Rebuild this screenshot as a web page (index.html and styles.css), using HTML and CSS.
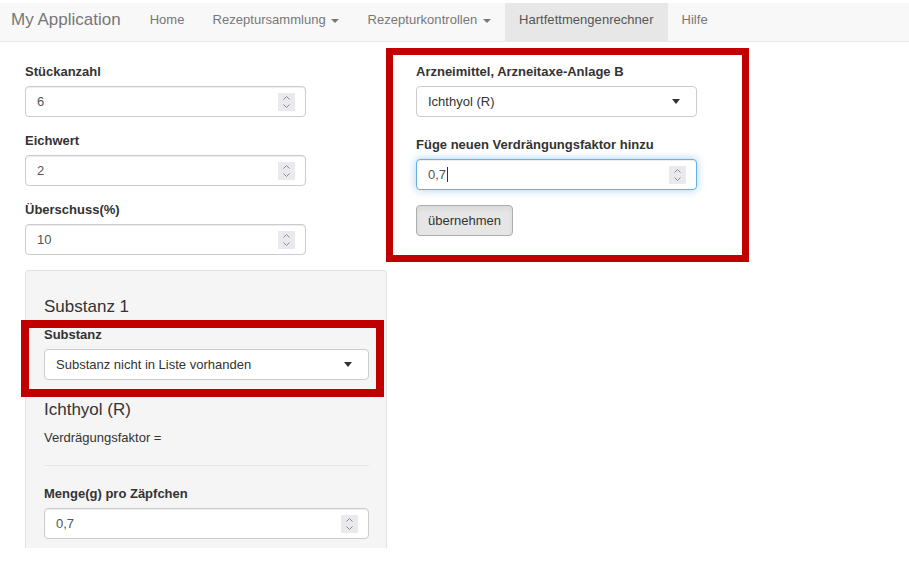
FILE: index.html
```html
<!DOCTYPE html>
<html lang="de">
<head>
<meta charset="utf-8">
<title>My Application</title>
<link rel="stylesheet" href="styles.css">
</head>
<body>
<div class="page">
  <nav class="navbar">
    <span class="brand">My Application</span>
    <ul class="nav">
      <li><a>Home</a></li>
      <li><a>Rezeptursammlung <span class="caret"></span></a></li>
      <li><a>Rezepturkontrollen <span class="caret"></span></a></li>
      <li class="active"><a>Hartfettmengenrechner</a></li>
      <li><a>Hilfe</a></li>
    </ul>
  </nav>

  <main class="main">
    <section class="col-left">
      <div class="form-group">
        <label>Stückanzahl</label>
        <div class="num"><input value="6"><svg class="spin" viewBox="0 0 17 18" width="17" height="18"><rect width="17" height="18" fill="#e9e9ee"/><polyline points="5.5,6.5 8.5,3.5 11.5,6.5" fill="none" stroke="#8a8a8a"/><polyline points="5.5,11.5 8.5,14.5 11.5,11.5" fill="none" stroke="#8a8a8a"/></svg></div>
      </div>
      <div class="form-group">
        <label>Eichwert</label>
        <div class="num"><input value="2"><svg class="spin" viewBox="0 0 17 18" width="17" height="18"><rect width="17" height="18" fill="#e9e9ee"/><polyline points="5.5,6.5 8.5,3.5 11.5,6.5" fill="none" stroke="#8a8a8a"/><polyline points="5.5,11.5 8.5,14.5 11.5,11.5" fill="none" stroke="#8a8a8a"/></svg></div>
      </div>
      <div class="form-group">
        <label>Überschuss(%)</label>
        <div class="num"><input value="10"><svg class="spin" viewBox="0 0 17 18" width="17" height="18"><rect width="17" height="18" fill="#e9e9ee"/><polyline points="5.5,6.5 8.5,3.5 11.5,6.5" fill="none" stroke="#8a8a8a"/><polyline points="5.5,11.5 8.5,14.5 11.5,11.5" fill="none" stroke="#8a8a8a"/></svg></div>
      </div>

      <div class="well">
        <h4 class="well-title">Substanz 1</h4>
        <div class="form-group">
          <label>Substanz</label>
          <div class="select"><span>Substanz nicht in Liste vorhanden</span><span class="sel-caret"></span></div>
        </div>
        <h4 class="sub-title">Ichthyol (R)</h4>
        <p class="factor">Verdrägungsfaktor =</p>
        <hr class="rule">
        <div class="form-group last">
          <label>Menge(g) pro Zäpfchen</label>
          <div class="num"><input value="0,7"><svg class="spin" viewBox="0 0 17 18" width="17" height="18"><rect width="17" height="18" fill="#e9e9ee"/><polyline points="5.5,6.5 8.5,3.5 11.5,6.5" fill="none" stroke="#8a8a8a"/><polyline points="5.5,11.5 8.5,14.5 11.5,11.5" fill="none" stroke="#8a8a8a"/></svg></div>
        </div>
      </div>
    </section>

    <section class="col-right">
      <div class="form-group wide">
        <label>Arzneimittel, Arzneitaxe-Anlage B</label>
        <div class="select"><span>Ichthyol (R)</span><span class="sel-caret"></span></div>
      </div>
      <div class="form-group">
        <label>Füge neuen Verdrängungsfaktor hinzu</label>
        <div class="num focus"><span class="val">0,7<span class="cursor"></span></span><svg class="spin" viewBox="0 0 17 18" width="17" height="18"><rect width="17" height="18" fill="#e9e9ee"/><polyline points="5.5,6.5 8.5,3.5 11.5,6.5" fill="none" stroke="#8a8a8a"/><polyline points="5.5,11.5 8.5,14.5 11.5,11.5" fill="none" stroke="#8a8a8a"/></svg></div>
      </div>
      <button class="btn">übernehmen</button>
    </section>
  </main>

  <div class="mark mark-right"></div>
  <div class="mark mark-left"></div>
</div>
</body>
</html>
```

FILE: styles.css
```css
* { box-sizing: border-box; }

html, body {
  margin: 0;
  padding: 0;
  background: #ffffff;
}

body {
  font-family: "Liberation Sans", Arial, sans-serif;
  font-size: 13px;
  line-height: 18px;
  color: #333333;
}

.page {
  position: relative;
  padding-top: 3px;
  min-height: 588px;
}

/* Navbar */
.navbar {
  display: flex;
  align-items: flex-start;
  height: 39px;
  background: #f8f8f8;
  border-bottom: 1px solid #e7e7e7;
}

.brand {
  padding: 7px 15px 0 11px;
  font-size: 17px;
  line-height: 19px;
  color: #777777;
}

.nav {
  display: flex;
  list-style: none;
  margin: 0;
  padding: 0;
}

.nav a {
  display: block;
  height: 38px;
  padding: 8px 14px 0 14px;
  color: #777777;
  font-size: 13px;
  line-height: 18px;
  letter-spacing: 0.04px;
}

.nav .active a {
  background: #e7e7e7;
  color: #555555;
}

.caret {
  display: inline-block;
  width: 0;
  height: 0;
  margin-left: 2px;
  vertical-align: middle;
  border-top: 4px solid #777777;
  border-left: 4px solid transparent;
  border-right: 4px solid transparent;
}

/* Main layout */
.main {
  display: flex;
  align-items: flex-start;
  padding: 21px 0 0 25px;
}

.col-left {
  width: 362px;
}

.col-right {
  width: 281px;
  margin-left: 29px;
}

.form-group {
  margin-bottom: 15px;
}

.form-group.wide {
  margin-bottom: 19px;
}

.form-group.last {
  margin-bottom: 0;
}

label {
  display: block;
  font-weight: bold;
  margin-bottom: 5px;
  line-height: 18px;
}

.col-left > .form-group .num {
  width: 281px;
}

/* Number inputs */
.num {
  display: flex;
  align-items: center;
  height: 31px;
  padding: 0 10px 0 11px;
  background: #ffffff;
  border: 1px solid #cccccc;
  border-radius: 4px;
  box-shadow: inset 0 1px 1px rgba(0, 0, 0, 0.075);
}

.num input {
  flex: 1;
  min-width: 0;
  border: 0;
  padding: 0;
  margin: 0;
  outline: none;
  background: transparent;
  font: inherit;
  color: #555555;
}

.num .val {
  flex: 1;
  color: #555555;
}

.num.focus {
  border-color: #66afe9;
  box-shadow: inset 0 1px 1px rgba(0, 0, 0, 0.075), 0 0 8px rgba(102, 175, 233, 0.6);
}

.cursor {
  display: inline-block;
  width: 1px;
  height: 15px;
  margin-left: 1px;
  vertical-align: -3px;
  background: #333333;
}

.spin {
  display: block;
  flex: none;
}

/* Selects */
.select {
  display: flex;
  align-items: center;
  justify-content: space-between;
  height: 31px;
  padding: 0 16px 0 11px;
  background: #ffffff;
  border: 1px solid #cccccc;
  border-radius: 4px;
  color: #333333;
}

.sel-caret {
  width: 0;
  height: 0;
  border-top: 5px solid #333333;
  border-left: 4px solid transparent;
  border-right: 4px solid transparent;
}

/* Well */
.well {
  background: #f5f5f5;
  border: 1px solid #e3e3e3;
  border-bottom: 0;
  border-radius: 4px 4px 0 0;
  padding: 18px 17px 9px 18px;
}

.well h4 {
  margin: 0;
  font-size: 17px;
  font-weight: normal;
  line-height: 19px;
  color: #333333;
}

.well .well-title {
  margin-top: 8px;
  margin-bottom: 10px;
}

.well .sub-title {
  margin-top: 20px;
}

.factor {
  margin: 10px 0 0 0;
}

.rule {
  margin: 18px 0 19px 0;
  border: 0;
  border-top: 1px solid #e6e6e6;
}

/* Button */
.btn {
  display: inline-block;
  height: 31px;
  padding: 0 11px;
  font: inherit;
  color: #333333;
  background: #e6e6e6;
  border: 1px solid #adadad;
  border-radius: 4px;
  box-shadow: inset 0 3px 5px rgba(0, 0, 0, 0.06);
}

/* Red annotation frames (overlays) */
.mark {
  position: absolute;
  border: 7px solid #c00000;
  pointer-events: none;
}

.mark-right {
  left: 386px;
  top: 48px;
  width: 363px;
  height: 214px;
}

.mark-left {
  left: 21px;
  top: 320px;
  width: 363px;
  height: 77px;
  border-width: 8px;
}
```
